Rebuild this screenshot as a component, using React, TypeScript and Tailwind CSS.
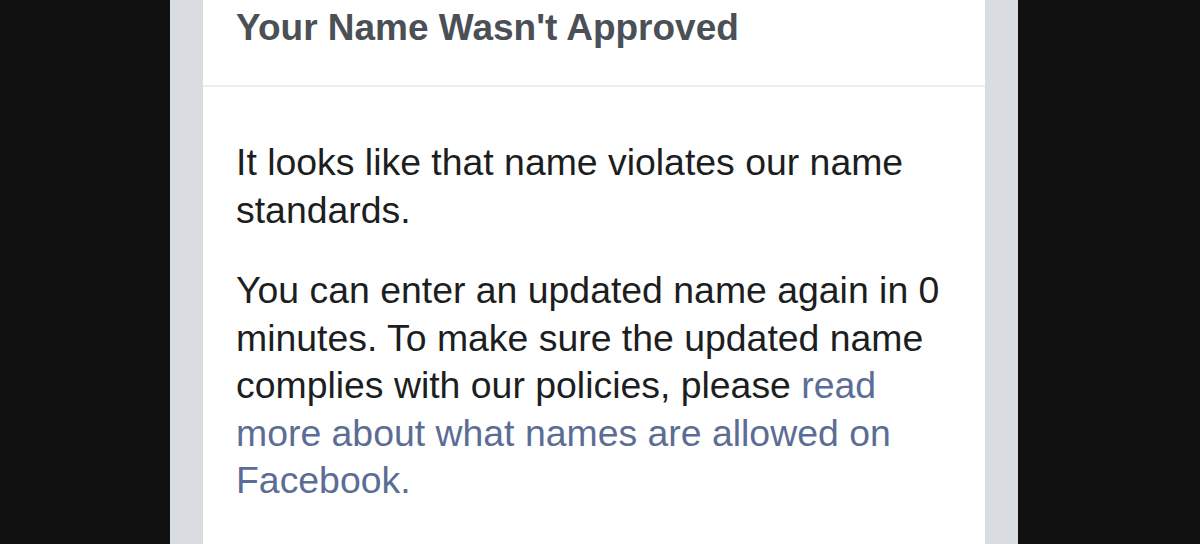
import React from 'react';

const font = { fontFamily: '"Liberation Sans", Arial, Helvetica, sans-serif' };

export default function App() {
  return (
    <div className="flex h-[544px] w-[1200px] overflow-hidden bg-[#111111]" style={font}>
      <div className="w-[170px] shrink-0" />
      <div className="w-[33px] shrink-0 bg-[#d9dce1]" />

      <div className="flex w-[782px] shrink-0 flex-col bg-white">
        <div className="h-[87px] border-b-2 border-[#eceef1] px-[33px] pt-[8px]">
          <h1 className="text-[37px] font-bold leading-[40px] text-[#4b4f56]">
            Your Name Wasn't Approved
          </h1>
        </div>

        <div className="px-[33px] pt-[52px] text-[37.4px] leading-[47.5px] text-[#1c1e21]">
          <p>It looks like that name violates our name standards.</p>
          <p className="mt-[33px]">
            You can enter an updated name again in 0 minutes. To make sure the updated name
            complies with our policies, please{' '}
            <a className="text-[#5b6d95]">read more about what names are allowed on Facebook.</a>
          </p>
        </div>
      </div>

      <div className="w-[33px] shrink-0 bg-[#d9dce1]" />
      <div className="flex-1" />
    </div>
  );
}
